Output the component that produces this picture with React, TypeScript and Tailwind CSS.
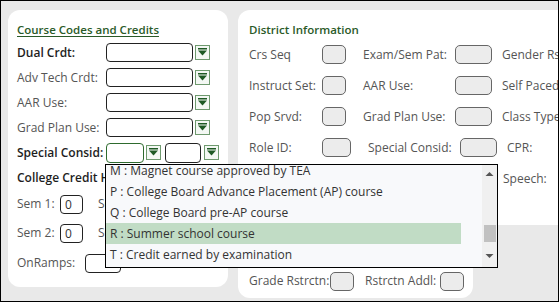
import React from "react";

const Arrow: React.FC = () => (
  <svg width="15" height="15" viewBox="0 0 15 15" className="shrink-0">
    <rect x="0.5" y="0.5" width="14" height="14" fill="#f4f8f4" stroke="#6f9a6f" />
    <rect x="3" y="3" width="9" height="1.5" fill="#1f5a25" />
    <path d="M3 5.5 H12 L7.5 10.5 Z" fill="#1f5a25" />
  </svg>
);

const LeftRow: React.FC<{ label: string; bold?: boolean; children?: React.ReactNode }> = ({
  label,
  bold,
  children,
}) => (
  <div className="h-[25px] flex items-center">
    <span
      className={`w-[89px] shrink-0 ${bold ? "font-semibold text-[#1e1e1e]" : "text-[#555]"}`}
    >
      {label}
    </span>
    {children}
  </div>
);

const Box: React.FC<{ w: string }> = ({ w }) => (
  <div className={`${w} h-[19px] rounded-[5px] border border-[#666] bg-[#ececec] shrink-0`} />
);

const DRow: React.FC<{ cells: [string, string, string, string, string] }> = ({ cells }) => (
  <div className="h-[31px] flex items-center">
    <span className="w-[73px] shrink-0 text-[#555]">{cells[0]}</span>
    <Box w={cells[1]} />
    <span className="w-[109px] shrink-0 pl-[17px] text-[#555]">{cells[2]}</span>
    <Box w={cells[3]} />
    <span className="pl-[10px] text-[#555] whitespace-nowrap">{cells[4]}</span>
  </div>
);

const options = [
  "M : Magnet course approved by TEA",
  "P : College Board Advance Placement (AP) course",
  "Q : College Board pre-AP course",
  "R : Summer school course",
  "T : Credit earned by examination",
];

export default function App() {
  return (
    <div className="w-[559px] h-[302px] border border-black bg-[#e9e9e9] overflow-hidden relative font-['Open_Sans',sans-serif] text-[12px]">
      <div className="flex pl-[7px] pt-[9px] gap-[10px]">
        {/* left card */}
        <div className="w-[220px] h-[277px] bg-white rounded-[12px] pl-[9px] pt-[10px] shrink-0">
          <div className="h-[20px] leading-[20px] text-[11.5px] font-semibold text-[#2a5a28] underline underline-offset-2">
            Course Codes and Credits
          </div>
          <LeftRow label="Dual Crdt:" bold>
            <div className="w-[87px] h-[19px] rounded-[4px] border border-[#222]" />
            <div className="ml-[2px]"><Arrow /></div>
          </LeftRow>
          <LeftRow label="Adv Tech Crdt:">
            <div className="w-[87px] h-[19px] rounded-[4px] border border-[#222]" />
            <div className="ml-[2px]"><Arrow /></div>
          </LeftRow>
          <LeftRow label="AAR Use:">
            <div className="w-[87px] h-[19px] rounded-[4px] border border-[#222]" />
            <div className="ml-[2px]"><Arrow /></div>
          </LeftRow>
          <LeftRow label="Grad Plan Use:">
            <div className="w-[87px] h-[19px] rounded-[4px] border border-[#222]" />
            <div className="ml-[2px]"><Arrow /></div>
          </LeftRow>
          <LeftRow label="Special Consid:" bold>
            <div className="w-[38px] h-[20px] rounded-[4px] border-[1.5px] border-[#2e6b2e]" />
            <div className="ml-[2px]"><Arrow /></div>
            <div className="ml-[4px] w-[36px] h-[20px] rounded-[4px] border border-[#222]" />
            <div className="ml-[3px]"><Arrow /></div>
          </LeftRow>
          <div className="h-[25px] flex items-center font-semibold text-[#1e1e1e] whitespace-nowrap">
            College Credit Hours
          </div>
          <div className="h-[28px] flex items-center text-[#555]">
            <span className="w-[43px] shrink-0">Sem 1:</span>
            <div className="w-[23px] h-[19px] rounded-[4px] border border-[#222] pl-[4px] leading-[17px] text-[#333]">0</div>
            <span className="ml-[15px] whitespace-nowrap">SCH:</span>
          </div>
          <div className="h-[30px] flex items-center text-[#555]">
            <span className="w-[43px] shrink-0">Sem 2:</span>
            <div className="w-[23px] h-[19px] rounded-[4px] border border-[#222] pl-[4px] leading-[17px] text-[#333]">0</div>
            <span className="ml-[15px] whitespace-nowrap">SCH:</span>
          </div>
          <div className="h-[30px] flex items-center text-[#555]">
            <span className="w-[68px] shrink-0">OnRamps:</span>
            <div className="w-[36px] h-[19px] rounded-[4px] border border-[#222]" />
          </div>
        </div>

        {/* right card */}
        <div className="w-[340px] shrink-0 flex flex-col">
          <div className="h-[215px] bg-white rounded-tl-[12px] pl-[11px] pt-[10px]">
            <div className="h-[20px] leading-[20px] text-[11.5px] font-semibold text-[#2a5a28]">
              District Information
            </div>
            <div className="mt-[-1px]">
              <DRow cells={["Crs Seq", "w-[24px]", "Exam/Sem Pat:", "w-[37px]", "Gender Rstrctn:"]} />
              <DRow cells={["Instruct Set:", "w-[24px]", "AAR Use:", "w-[37px]", "Self Paced:"]} />
              <DRow cells={["Pop Srvd:", "w-[24px]", "Grad Plan Use:", "w-[37px]", "Class Type:"]} />
              <DRow cells={["Role ID:", "w-[29px]", "Special Consid:", "w-[37px]", "CPR:"]} />
              <div className="h-[31px] flex items-center">
                <span className="w-[254px] shrink-0" />
                <span className="text-[#555]">Speech:</span>
              </div>
            </div>
          </div>
          <div className="w-[235px] h-[73px] bg-white rounded-b-[12px] pl-[11px] flex items-end pb-[7px]">
            <div className="h-[20px] flex items-center text-[#555]">
              <span className="w-[81px] shrink-0">Grade Rstrctn:</span>
              <Box w="w-[24px]" />
              <span className="w-[86px] shrink-0 pl-[11px]">Rstrctn Addl:</span>
              <Box w="w-[24px]" />
            </div>
          </div>
        </div>
      </div>

      {/* open dropdown list */}
      <div className="absolute left-[104px] top-[163px] w-[393px] h-[104px] border border-black bg-[#f8f9fb] flex overflow-hidden">
        <div className="flex-1 overflow-hidden">
          <div className="mt-[-5px] w-[355px]">
            {options.map((o) => (
              <div
                key={o}
                className={`h-[21px] leading-[21px] pl-[4px] whitespace-nowrap text-[#333] ${
                  o.startsWith("R") ? "bg-[#c1dcc5]" : ""
                }`}
              >
                {o}
              </div>
            ))}
          </div>
        </div>
        <div className="w-[15px] h-full bg-[#f0f0f0] flex flex-col items-center">
          <svg width="9" height="6" viewBox="0 0 9 6" className="mt-[6px]">
            <path d="M0.5 5 L4.5 1 L8.5 5 Z" fill="#555" />
          </svg>
          <div className="mt-[48px] w-[12px] h-[17px] bg-[#c1c1c1]" />
          <svg width="9" height="6" viewBox="0 0 9 6" className="mt-[11px]">
            <path d="M0.5 1 L4.5 5 L8.5 1 Z" fill="#555" />
          </svg>
        </div>
      </div>
    </div>
  );
}
